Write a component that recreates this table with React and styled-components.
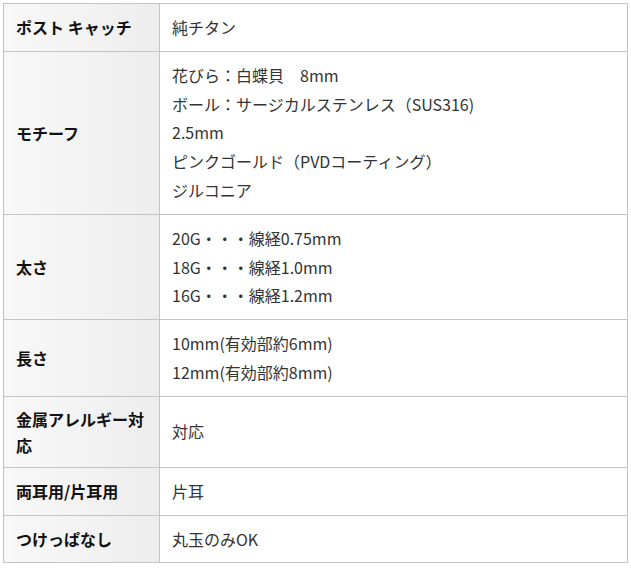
import styled, { createGlobalStyle } from 'styled-components';

const GlobalStyle = createGlobalStyle`
  body {
    margin: 0;
    padding: 3px 0 0 3px;
    background: #fff;
    font-family: "Noto Sans CJK JP", "Noto Sans", sans-serif;
  }
`;

const SpecTable = styled.table`
  width: 625px;
  border-collapse: collapse;
  table-layout: fixed;
  font-size: 16px;
`;

const HeadCell = styled.th`
  width: 131px;
  padding: 9px 12px;
  border: 1px solid #c4c4c4;
  background: linear-gradient(to right, #f8f8f8, #ededed);
  color: #111;
  font-weight: 700;
  text-align: left;
  line-height: 26px;
  vertical-align: middle;
`;

const ValueCell = styled.td`
  padding: 9px 12px;
  border: 1px solid #c4c4c4;
  color: #333;
  line-height: 1.8;
  vertical-align: middle;
`;

const Line = styled.div`
  white-space: nowrap;
`;

const specs = [
  { label: 'ポスト キャッチ', values: ['純チタン'] },
  {
    label: 'モチーフ',
    values: [
      '花びら：白蝶貝　8mm',
      'ボール：サージカルステンレス（SUS316)',
      '2.5mm',
      'ピンクゴールド（PVDコーティング）',
      'ジルコニア',
    ],
  },
  {
    label: '太さ',
    values: ['20G・・・線経0.75mm', '18G・・・線経1.0mm', '16G・・・線経1.2mm'],
  },
  { label: '長さ', values: ['10mm(有効部約6mm)', '12mm(有効部約8mm)'] },
  { label: '金属アレルギー対応', values: ['対応'] },
  { label: '両耳用/片耳用', values: ['片耳'] },
  { label: 'つけっぱなし', values: ['丸玉のみOK'] },
];

const App = () => {
  return (
    <>
      <GlobalStyle />
      <SpecTable>
        <tbody>
          {specs.map(row => (
            <tr key={row.label}>
              <HeadCell>{row.label}</HeadCell>
              <ValueCell>
                {row.values.map(v => (
                  <Line key={v}>{v}</Line>
                ))}
              </ValueCell>
            </tr>
          ))}
        </tbody>
      </SpecTable>
    </>
  );
};

export default App;
